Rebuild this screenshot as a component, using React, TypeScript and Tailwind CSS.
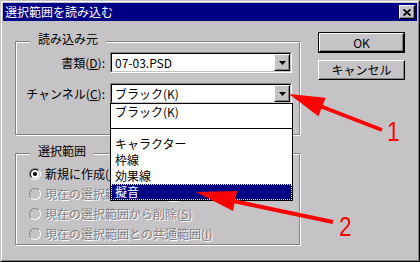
import React from "react";

const font = "font-['Noto_Sans_CJK_JP',sans-serif]";

type BoxProps = { className?: string; children?: React.ReactNode };

const Sunken = ({ className = "", children }: BoxProps) => (
  <div className={`border border-t-[#848284] border-l-[#848284] border-b-white border-r-white ${className}`}>
    <div className="h-full border border-t-black border-l-black border-b-[#c6c3c6] border-r-[#c6c3c6] bg-white flex items-center">
      {children}
    </div>
  </div>
);

const Raised = ({ className = "", children }: BoxProps) => (
  <div className={`border border-t-white border-l-white border-b-black border-r-black bg-[#c6c3c6] ${className}`}>
    <div className="h-full w-full border border-t-[#c6c3c6] border-l-[#c6c3c6] border-b-[#848284] border-r-[#848284] flex items-center justify-center">
      {children}
    </div>
  </div>
);

const Group = ({ label, className = "", children }: BoxProps & { label: string }) => (
  <div className={`relative w-[285px] border border-[#848284] shadow-[inset_1px_1px_0_#fff,1px_1px_0_#fff] ${className}`}>
    <span className="absolute left-[14px] -top-[10px] bg-[#c6c3c6] px-[8px] leading-[14px]">{label}</span>
    {children}
  </div>
);

const Combo = ({ text }: { text: React.ReactNode }) => (
  <Sunken className="w-[182px] h-[21px]">
    <span className="flex-1 pl-[3px] leading-[14px]">{text}</span>
    <Raised className="w-[16px] h-[17px]">
      <svg width="7" height="4" viewBox="0 0 7 4">
        <polygon points="0,0 7,0 3.5,4" fill="black" />
      </svg>
    </Raised>
  </Sunken>
);

const Radio = ({ checked, disabled }: { checked?: boolean; disabled?: boolean }) => (
  <div className="w-[12px] h-[12px] shrink-0 rounded-full border border-t-[#848284] border-l-[#848284] border-b-white border-r-white">
    <div
      className={
        disabled
          ? "w-full h-full rounded-full border border-[#c6c3c6] bg-[#c6c3c6]"
          : "w-full h-full rounded-full border border-t-black border-l-black border-b-[#c6c3c6] border-r-[#c6c3c6] bg-white flex items-center justify-center"
      }
    >
      {checked && <div className="w-[4px] h-[4px] rounded-full bg-black" />}
    </div>
  </div>
);

const options = [
  { label: "新規に作成", key: "N", checked: true, disabled: false },
  { label: "現在の選択範囲に追加", key: "A", checked: false, disabled: true },
  { label: "現在の選択範囲から削除", key: "S", checked: false, disabled: true },
  { label: "現在の選択範囲との共通範囲", key: "I", checked: false, disabled: true },
];

const channels = ["ブラック(K)", "-", "キャラクター", "枠線", "効果線", "擬音"];

export default function App() {
  return (
    <div className={`relative w-[420px] h-[262px] bg-[#c6c3c6] ${font} text-[12px] text-black`}>
      <div className="h-full border border-t-[#c6c3c6] border-l-[#c6c3c6] border-b-black border-r-black">
        <div className="h-full border border-t-white border-l-white border-b-[#848284] border-r-[#848284] p-px flex flex-col">
          {/* title bar */}
          <div className="h-[18px] bg-[#000084] flex items-center justify-between pl-[2px] pr-[2px]">
            <span className="text-white text-[12px] leading-[14px]">選択範囲を読み込む</span>
            <Raised className="w-[16px] h-[14px]">
              <svg width="8" height="7" viewBox="0 0 8 7">
                <path d="M0.5 0.5 L7.5 6.5 M7.5 0.5 L0.5 6.5" stroke="black" strokeWidth="1.8" />
              </svg>
            </Raised>
          </div>

          <div className="flex-1 flex pl-[12px]">
            {/* left column */}
            <div className="flex flex-col pt-[20px] gap-[18px]">
              <Group label="読み込み元" className="h-[94px]">
                <div className="flex flex-col gap-[10px] pt-[10px]">
                  <div className="flex items-center">
                    <span className="w-[89px] text-right leading-[14px]">
                      書類(<span className="underline">D</span>):
                    </span>
                    <div className="ml-[5px]">
                      <Combo text="07-03.PSD" />
                    </div>
                  </div>
                  <div className="flex items-center">
                    <span className="w-[89px] text-right leading-[14px]">
                      チャンネル(<span className="underline">C</span>):
                    </span>
                    <div className="ml-[5px] relative">
                      <Combo text="ブラック(K)" />
                      {/* open drop-down list */}
                      <div className="absolute left-0 top-[20px] w-[183px] border border-black bg-white z-10">
                        {channels.map((c) =>
                          c === "-" ? (
                            <div key={c} className="h-[16px] flex items-center">
                              <div className="h-px w-full bg-black" />
                            </div>
                          ) : c === "擬音" ? (
                            <div
                              key={c}
                              className="h-[16px] flex items-center pl-[3px] bg-[#000084] text-white border border-dotted border-[#ffff80]"
                            >
                              <span className="leading-[14px]">{c}</span>
                            </div>
                          ) : (
                            <div key={c} className="h-[16px] flex items-center pl-[3px] border border-transparent">
                              <span className="leading-[14px]">{c}</span>
                            </div>
                          )
                        )}
                      </div>
                    </div>
                  </div>
                </div>
              </Group>

              <Group label="選択範囲" className="h-[92px]">
                <div className="flex flex-col pt-[10px]">
                  {options.map((o) => (
                    <div key={o.key} className="h-[20px] flex items-center gap-[4px] pl-[13px]">
                      <Radio checked={o.checked} disabled={o.disabled} />
                      <span
                        className={
                          o.disabled
                            ? "leading-[14px] whitespace-nowrap text-[#848284] [text-shadow:1px_1px_0_#fff]"
                            : "leading-[14px] whitespace-nowrap"
                        }
                      >
                        {o.label}(<span className="underline">{o.key}</span>)
                      </span>
                    </div>
                  ))}
                </div>
              </Group>
            </div>

            {/* right column */}
            <div className="ml-[18px] pt-[11px] flex flex-col gap-[7px] w-[87px]">
              <div className="h-[21px] border border-black">
                <Raised className="h-full">
                  <span className="leading-[14px]">OK</span>
                </Raised>
              </div>
              <Raised className="h-[20px]">
                <span className="leading-[14px]">キャンセル</span>
              </Raised>
            </div>
          </div>
        </div>
      </div>

      {/* red annotation arrows */}
      <svg className="absolute inset-0 pointer-events-none z-20" width="420" height="262" viewBox="0 0 420 262">
        <line x1="382" y1="130" x2="320" y2="106" stroke="#ff0000" strokeWidth="4" />
        <polygon points="289,94 325.6,97.7 318.4,116.3" fill="#ff0000" />
        <line x1="333" y1="222" x2="233" y2="201" stroke="#ff0000" strokeWidth="4" />
        <polygon points="196,192 237,191 233,211" fill="#ff0000" />
      </svg>
      <span className="absolute left-[387px] top-[118px] z-20 text-[28px] leading-none text-[#ff0000] font-['Liberation_Sans',sans-serif] scale-x-[0.8] origin-left">
        1
      </span>
      <span className="absolute left-[339px] top-[213px] z-20 text-[28px] leading-none text-[#ff0000] font-['Liberation_Sans',sans-serif] scale-x-[0.8] origin-left">
        2
      </span>
    </div>
  );
}
